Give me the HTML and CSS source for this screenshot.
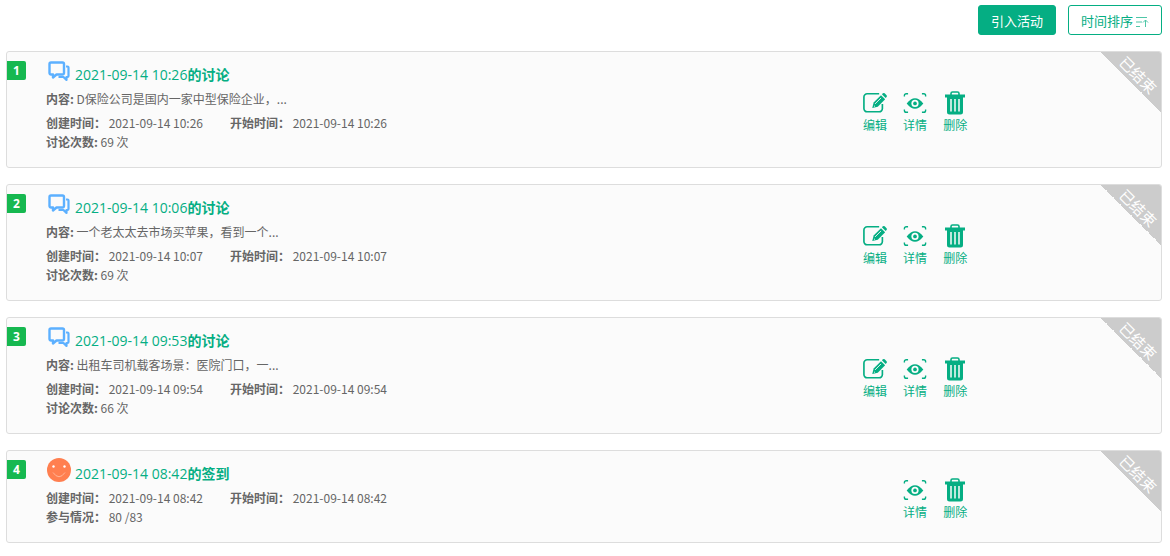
FILE: index.html
```html
<!DOCTYPE html>
<html lang="zh-CN">
<head>
    <meta charset="UTF-8">
    <meta name="viewport" content="width=device-width, initial-scale=1.0">
    <title>活动列表</title>
    <link rel="stylesheet" href="styles.css">
</head>
<body>
    <!-- Shared icons -->
    <svg class="icon-defs" width="0" height="0" aria-hidden="true">
        <symbol id="icon-chat" viewBox="0 0 24 24">
            <path d="M4 3.500h11.500a1.500 1.500 0 0 1 1.500 1.500v9a1.500 1.500 0 0 1-1.500 1.500H9.500l-3.500 3v-3H4A1.500 1.500 0 0 1 2.500 14V5A1.500 1.500 0 0 1 4 3.500z" fill="none" stroke="#5cb0ff" stroke-width="2.400" stroke-linejoin="round"/>
            <path d="M19 7.500h1.500a1 1 0 0 1 1 1v8.500a1 1 0 0 1-1 1H19.500v3l-3-3h-5" fill="none" stroke="#5cb0ff" stroke-width="2.200" stroke-linejoin="round"/>
        </symbol>
        <symbol id="icon-smile" viewBox="0 0 24 24">
            <circle cx="12" cy="12" r="12" fill="#ff7f50"/>
            <circle cx="6.500" cy="8.500" r="1.200" fill="#fff"/>
            <circle cx="17.500" cy="8.500" r="1.200" fill="#fff"/>
            <path d="M6 14.500q6 8.500 12 0" fill="none" stroke="#ffb597" stroke-width="1"/>
        </symbol>
        <symbol id="icon-edit" viewBox="0 0 26 24">
            <path d="M17.500 2H4.500a3.500 3.500 0 0 0-3.500 3.500v12.500a3.500 3.500 0 0 0 3.500 3.500h13a3.500 3.500 0 0 0 3.500-3.500v-5" fill="none" stroke="currentColor" stroke-width="1.800"/>
            <path d="M10 17.500l1.500-6 8-8 4.500 4.500-8 8z" fill="currentColor"/>
            <path d="M20.500 2.500l1-1q1-.8 2 0l2 2q.8 1 0 2l-1 1z" fill="currentColor"/>
            <path d="M13 13l6.500-6.500M12 15l1 1" stroke="#fbfbfb" stroke-width="1"/>
        </symbol>
        <symbol id="icon-view" viewBox="0 0 26 24">
            <path d="M1.500 5V4a2 2 0 0 1 2-2h2M20.500 2h2a2 2 0 0 1 2 2v1M24.500 19v1a2 2 0 0 1-2 2h-2M5.500 22h-2a2 2 0 0 1-2-2v-1" fill="none" stroke="currentColor" stroke-width="1.500"/>
            <path d="M4 12.500q9-11.500 18 0q-9 11.500-18 0z" fill="currentColor"/>
            <circle cx="13" cy="12.500" r="3.900" fill="#fbfbfb"/>
            <circle cx="13" cy="12.500" r="2" fill="currentColor"/>
        </symbol>
        <symbol id="icon-trash" viewBox="0 0 24 24">
            <path d="M8 4V2.500A1.500 1.500 0 0 1 9.500 1h5A1.500 1.500 0 0 1 16 2.500V4" fill="none" stroke="currentColor" stroke-width="1.600"/>
            <path d="M2 3.500h20v3H2zM4 6h16V21a2.500 2.500 0 0 1-2.500 2.500h-11A2.500 2.500 0 0 1 4 21z" fill="currentColor"/>
            <path d="M8 8v12.500M12 8v12.500M16 8v12.500" stroke="#fbfbfb" stroke-width="1.500"/>
        </symbol>
        <symbol id="icon-sort" viewBox="0 0 14 12">
            <path d="M1 1.500h11M1 6h6M1 10.500h4M10.500 11V4M8 6.500l2.500-2.500 2.500 2.500" fill="none" stroke="currentColor" stroke-width="1"/>
        </symbol>
    </svg>

    <div class="toolbar">
        <button type="button" class="btn btn-primary">引入活动</button>
        <button type="button" class="btn btn-outline">时间排序 <svg class="sort-icon"><use href="#icon-sort"/></svg></button>
    </div>

    <div class="activity-list">
        <div class="activity">
            <span class="number">1</span>
            <div class="info">
                <div class="title">
                    <svg class="type-icon"><use href="#icon-chat"/></svg>
                    <a href="#">2021-09-14 10:26<b>的讨论</b></a>
                </div>
                <p class="summary"><b>内容:</b> D保险公司是国内一家中型保险企业，...</p>
                <div class="times">
                    <span><b>创建时间：</b> 2021-09-14 10:26</span>
                    <span><b>开始时间：</b> 2021-09-14 10:26</span>
                </div>
                <div class="count"><b>讨论次数:</b> 69 次</div>
            </div>
            <div class="actions">
                <button type="button"><svg><use href="#icon-edit"/></svg>编辑</button>
                <button type="button"><svg><use href="#icon-view"/></svg>详情</button>
                <button type="button"><svg><use href="#icon-trash"/></svg>删除</button>
            </div>
            <div class="ribbon"><span>已结束</span></div>
        </div>

        <div class="activity">
            <span class="number">2</span>
            <div class="info">
                <div class="title">
                    <svg class="type-icon"><use href="#icon-chat"/></svg>
                    <a href="#">2021-09-14 10:06<b>的讨论</b></a>
                </div>
                <p class="summary"><b>内容:</b> 一个老太太去市场买苹果，看到一个...</p>
                <div class="times">
                    <span><b>创建时间：</b> 2021-09-14 10:07</span>
                    <span><b>开始时间：</b> 2021-09-14 10:07</span>
                </div>
                <div class="count"><b>讨论次数:</b> 69 次</div>
            </div>
            <div class="actions">
                <button type="button"><svg><use href="#icon-edit"/></svg>编辑</button>
                <button type="button"><svg><use href="#icon-view"/></svg>详情</button>
                <button type="button"><svg><use href="#icon-trash"/></svg>删除</button>
            </div>
            <div class="ribbon"><span>已结束</span></div>
        </div>

        <div class="activity">
            <span class="number">3</span>
            <div class="info">
                <div class="title">
                    <svg class="type-icon"><use href="#icon-chat"/></svg>
                    <a href="#">2021-09-14 09:53<b>的讨论</b></a>
                </div>
                <p class="summary"><b>内容:</b> 出租车司机载客场景：医院门口，一...</p>
                <div class="times">
                    <span><b>创建时间：</b> 2021-09-14 09:54</span>
                    <span><b>开始时间：</b> 2021-09-14 09:54</span>
                </div>
                <div class="count"><b>讨论次数:</b> 66 次</div>
            </div>
            <div class="actions">
                <button type="button"><svg><use href="#icon-edit"/></svg>编辑</button>
                <button type="button"><svg><use href="#icon-view"/></svg>详情</button>
                <button type="button"><svg><use href="#icon-trash"/></svg>删除</button>
            </div>
            <div class="ribbon"><span>已结束</span></div>
        </div>

        <div class="activity">
            <span class="number">4</span>
            <div class="info">
                <div class="title">
                    <svg class="type-icon"><use href="#icon-smile"/></svg>
                    <a href="#">2021-09-14 08:42<b>的签到</b></a>
                </div>
                <div class="times">
                    <span><b>创建时间：</b> 2021-09-14 08:42</span>
                    <span><b>开始时间：</b> 2021-09-14 08:42</span>
                </div>
                <div class="count"><b>参与情况：</b> 80 /83</div>
            </div>
            <div class="actions">
                <button type="button"><svg><use href="#icon-view"/></svg>详情</button>
                <button type="button"><svg><use href="#icon-trash"/></svg>删除</button>
            </div>
            <div class="ribbon"><span>已结束</span></div>
        </div>
    </div>
</body>
</html>
```
FILE: styles.css
```css
* {
    box-sizing: border-box;
}
body {
    margin: 0;
    padding: 5px 8px 0 6px;
    background-color: #fff;
    color: #666;
    font-family: "Noto Sans CJK SC", sans-serif;
    font-size: 12px;
    line-height: 19px;
}
button {
    font-family: inherit;
    cursor: pointer;
}
.icon-defs {
    position: absolute;
}
.toolbar {
    display: flex;
    justify-content: flex-end;
    gap: 12px;
    margin-bottom: 16px;
}
.btn {
    display: flex;
    align-items: center;
    gap: 2px;
    height: 30px;
    padding: 0 12px;
    border: 1px solid #05ae83;
    border-radius: 3px;
    font-size: 13px;
}
.btn-primary {
    background-color: #05ae83;
    color: #fff;
}
.btn-outline {
    background-color: #fff;
    color: #05ae83;
}
.sort-icon {
    width: 14px;
    height: 12px;
    margin-top: 4px;
    opacity: 0.7;
}
.activity-list {
    display: flex;
    flex-direction: column;
    gap: 16px;
}
.activity {
    position: relative;
    display: flex;
    border: 1px solid #ddd;
    border-radius: 3px;
    background-color: #fbfbfb;
    overflow: hidden;
}
.number {
    width: 19px;
    height: 19px;
    margin-top: 9px;
    border-radius: 0 2px 2px 0;
    background-color: #16b850;
    color: #fff;
    font-family: "Open Sans", sans-serif;
    font-weight: bold;
    text-align: center;
}
.info {
    flex: 1;
    padding: 7px 0 16px 20px;
}
.title {
    display: flex;
    align-items: center;
    gap: 4px;
    height: 30px;
    padding-left: 1px;
}
.title a {
    color: #05ae83;
    font-family: "Open Sans", "Noto Sans CJK SC", sans-serif;
    font-size: 14px;
    font-weight: 500;
    text-decoration: none;
}
.type-icon {
    width: 24px;
    height: 24px;
    margin-bottom: 6px;
}
.summary {
    margin: 0 0 5px;
}
.times {
    display: flex;
    gap: 27px;
}
.actions {
    display: flex;
    align-items: center;
    gap: 16px;
    margin-right: 16.8%;
    padding-top: 6px;
}
.actions button {
    display: flex;
    flex-direction: column;
    align-items: center;
    padding: 0;
    border: none;
    background: none;
    color: #05ae83;
    font-size: 12px;
    line-height: 20px;
}
.actions svg {
    width: 24px;
    height: 24px;
}
.ribbon {
    position: absolute;
    top: 0;
    right: 0;
    width: 60px;
    height: 60px;
    background: linear-gradient(45deg, transparent 50%, #ccc 50%);
    color: #fff;
    font-size: 15px;
    line-height: 15px;
}
.ribbon span {
    position: absolute;
    top: 15px;
    right: 0;
    white-space: nowrap;
    transform: rotate(45deg);
}
```
